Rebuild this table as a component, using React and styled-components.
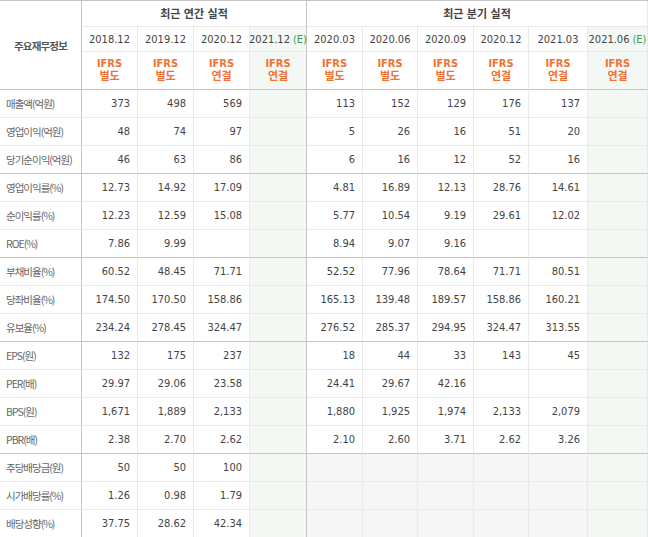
import styled, { createGlobalStyle } from "styled-components";

const GlobalStyle = createGlobalStyle`
  html, body {
    margin: 0;
    padding: 0;
    background: #fff;
  }
  body {
    font-family: "DejaVu Sans Condensed", "Noto Sans CJK KR", sans-serif;
  }
`;

const annualYears = ["2018.12", "2019.12", "2020.12"];
const quarterYears = ["2020.03", "2020.06", "2020.09", "2020.12", "2021.03"];
const annualIfrs = ["별도", "별도", "연결"];
const quarterIfrs = ["별도", "별도", "별도", "연결", "연결"];

// 값 배열: 연간 3개 + 연간추정 1개 + 분기 5개 + 분기추정 1개
const rows = [
  { label: "매출액(억원)", a: ["373", "498", "569"], q: ["113", "152", "129", "176", "137"] },
  { label: "영업이익(억원)", a: ["48", "74", "97"], q: ["5", "26", "16", "51", "20"] },
  { label: "당기순이익(억원)", a: ["46", "63", "86"], q: ["6", "16", "12", "52", "16"], groupEnd: true },
  { label: "영업이익률(%)", a: ["12.73", "14.92", "17.09"], q: ["4.81", "16.89", "12.13", "28.76", "14.61"] },
  { label: "순이익률(%)", a: ["12.23", "12.59", "15.08"], q: ["5.77", "10.54", "9.19", "29.61", "12.02"] },
  { label: "ROE(%)", a: ["7.86", "9.99", ""], q: ["8.94", "9.07", "9.16", "", ""], groupEnd: true },
  { label: "부채비율(%)", a: ["60.52", "48.45", "71.71"], q: ["52.52", "77.96", "78.64", "71.71", "80.51"] },
  { label: "당좌비율(%)", a: ["174.50", "170.50", "158.86"], q: ["165.13", "139.48", "189.57", "158.86", "160.21"] },
  { label: "유보율(%)", a: ["234.24", "278.45", "324.47"], q: ["276.52", "285.37", "294.95", "324.47", "313.55"], groupEnd: true },
  { label: "EPS(원)", a: ["132", "175", "237"], q: ["18", "44", "33", "143", "45"] },
  { label: "PER(배)", a: ["29.97", "29.06", "23.58"], q: ["24.41", "29.67", "42.16", "", ""] },
  { label: "BPS(원)", a: ["1,671", "1,889", "2,133"], q: ["1,880", "1,925", "1,974", "2,133", "2,079"] },
  { label: "PBR(배)", a: ["2.38", "2.70", "2.62"], q: ["2.10", "2.60", "3.71", "2.62", "3.26"], groupEnd: true },
  { label: "주당배당금(원)", a: ["50", "50", "100"], q: null },
  { label: "시가배당률(%)", a: ["1.26", "0.98", "1.79"], q: null },
  { label: "배당성향(%)", a: ["37.75", "28.62", "42.34"], q: null },
];

const LIGHT = "#e9e9e9";
const DARK = "#c4c4c4";

const Table = styled.div`
  display: grid;
  width: 648px;
  grid-template-columns: 82px 56px 56px 56px 57px 56px 55px 56px 55px 59px 60px;
  grid-template-rows: 26px 25px 38px repeat(16, 28px);
  border-top: 1px solid ${DARK};
  box-sizing: border-box;
  font-size: 11px;
  color: #444;
`;

const Cell = styled.div`
  box-sizing: border-box;
  display: flex;
  align-items: center;
  justify-content: ${(p) => (p.$align === "right" ? "flex-end" : p.$align === "left" ? "flex-start" : "center")};
  padding: ${(p) => (p.$align === "right" ? "0 7px 0 0" : p.$align === "left" ? "0 0 0 6px" : "0")};
  border-right: 1px solid ${(p) => (p.$strongRight ? DARK : LIGHT)};
  border-bottom: 1px solid ${(p) => (p.$strongBottom ? DARK : LIGHT)};
  background: ${(p) => (p.$tone === "est" ? "#f3f8f4" : p.$tone === "empty" ? "#f6f6f6" : "#fff")};
  white-space: nowrap;
`;

const CornerCell = styled(Cell)`
  grid-row: 1 / span 3;
  font-family: "Noto Sans CJK KR", sans-serif;
  font-weight: bold;
  color: #555;
  font-size: 10.5px;
  letter-spacing: -0.8px;
`;

const GroupCell = styled(Cell)`
  grid-column: span ${(p) => p.$span};
  font-weight: bold;
  color: #444;
  font-size: 11px;
  padding-bottom: 2px;
`;

const Year = styled(Cell)`
  color: #444;
`;

const Est = styled.span`
  color: #3c9a4e;
  margin-left: 3px;
`;

const IfrsCell = styled(Cell)`
  flex-direction: column;
  color: #f07231;
  font-weight: bold;
  font-size: 11px;
  line-height: 13px;
  padding-bottom: 2px;
`;

const Label = styled(Cell)`
  font-family: "Noto Sans CJK KR", sans-serif;
  font-size: 10.5px;
  color: #666;
  letter-spacing: -1px;
  padding-bottom: 1px;
`;

const Value = styled(Cell)`
  color: #444;
`;

function Ifrs({ kind, ...rest }) {
  return (
    <IfrsCell {...rest}>
      <span>IFRS</span>
      <span>{kind}</span>
    </IfrsCell>
  );
}

export default function App() {
  return (
    <>
      <GlobalStyle />
      <Table>
        <CornerCell $strongRight $strongBottom>주요재무정보</CornerCell>
        <GroupCell $span={4} $strongRight>최근 연간 실적</GroupCell>
        <GroupCell $span={6}>최근 분기 실적</GroupCell>

        {annualYears.map((y) => (
          <Year key={y}>{y}</Year>
        ))}
        <Year $tone="est" $strongRight>
          2021.12<Est>(E)</Est>
        </Year>
        {quarterYears.map((y) => (
          <Year key={"q" + y}>{y}</Year>
        ))}
        <Year $tone="est">
          2021.06<Est>(E)</Est>
        </Year>

        {annualIfrs.map((k, i) => (
          <Ifrs key={"ai" + i} kind={k} $strongBottom />
        ))}
        <Ifrs kind="연결" $tone="est" $strongRight $strongBottom />
        {quarterIfrs.map((k, i) => (
          <Ifrs key={"qi" + i} kind={k} $strongBottom />
        ))}
        <Ifrs kind="연결" $tone="est" $strongBottom />

        {rows.map((r) => {
          const sb = !!r.groupEnd;
          return [
            <Label key={r.label} $align="left" $strongRight $strongBottom={sb}>
              {r.label}
            </Label>,
            ...r.a.map((v, i) => (
              <Value key={r.label + "a" + i} $align="right" $strongBottom={sb}>
                {v}
              </Value>
            )),
            <Value key={r.label + "ae"} $tone="est" $strongRight $strongBottom={sb} />,
            ...(r.q
              ? r.q.map((v, i) => (
                  <Value key={r.label + "q" + i} $align="right" $strongBottom={sb}>
                    {v}
                  </Value>
                ))
              : [0, 1, 2, 3, 4].map((i) => (
                  <Value key={r.label + "q" + i} $tone="empty" $strongBottom={sb} />
                ))),
            <Value key={r.label + "qe"} $tone="est" $strongBottom={sb} />,
          ];
        })}
      </Table>
    </>
  );
}
